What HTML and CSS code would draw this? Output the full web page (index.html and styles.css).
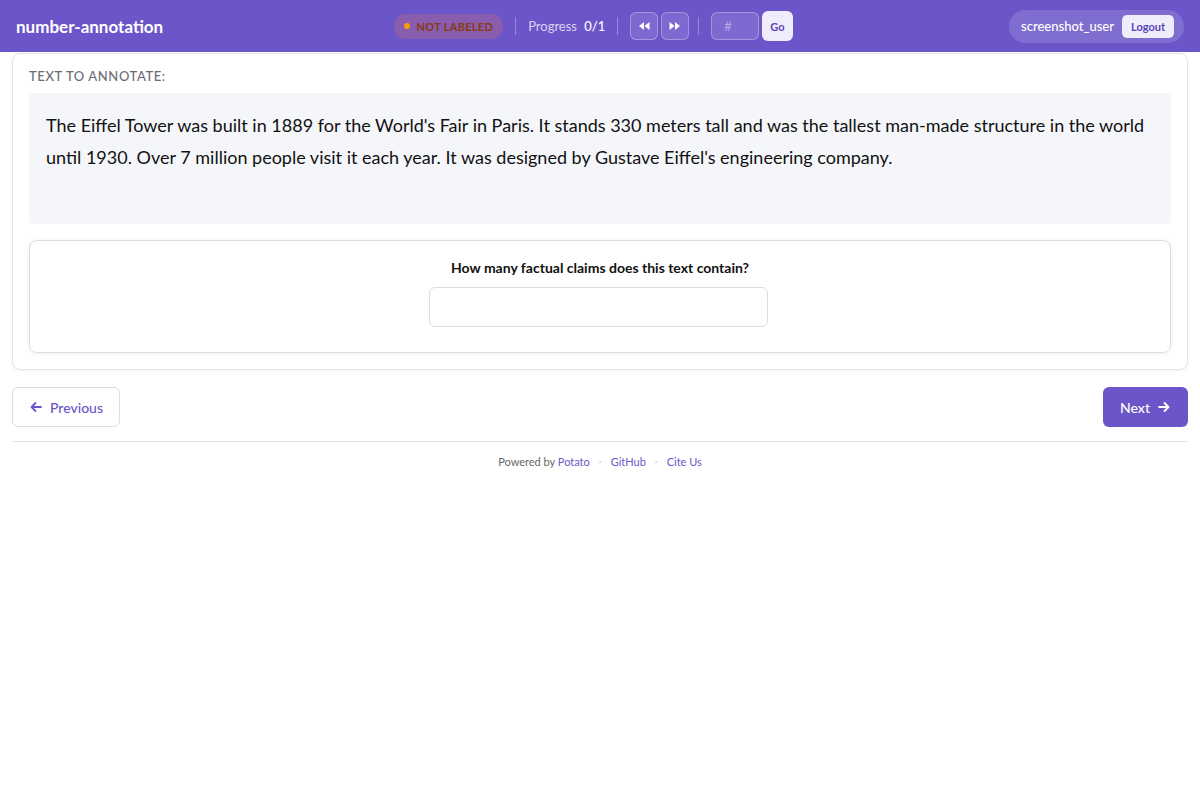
FILE: index.html
```html
<!DOCTYPE html>
<html lang="en">
<head>
  <meta charset="UTF-8">
  <meta name="viewport" content="width=device-width, initial-scale=1.0">
  <title>number-annotation</title>
  <link rel="stylesheet" href="styles.css">
</head>
<body>
  <header class="topbar">
    <div class="brand">number-annotation</div>

    <div class="status-area">
      <span class="status-pill"><span class="dot"></span>NOT LABELED</span>
      <span class="divider"></span>
      <span class="progress">Progress <b>0/1</b></span>
      <span class="divider"></span>
      <button class="nav-btn" title="First">
        <svg width="12" height="10" viewBox="0 0 12 10"><path d="M6 1v8L1 5zM11.5 1v8L6.5 5z" fill="#fff"/></svg>
      </button>
      <button class="nav-btn" title="Last">
        <svg width="12" height="10" viewBox="0 0 12 10"><path d="M0.5 1v8L5.5 5zM6 1v8L11 5z" fill="#fff"/></svg>
      </button>
      <span class="divider"></span>
      <input class="jump-input" type="text" placeholder="#">
      <button class="go-btn">Go</button>
    </div>

    <div class="user-box">
      <span class="username">screenshot_user</span>
      <button class="logout-btn">Logout</button>
    </div>
  </header>

  <main class="page">
    <section class="card">
      <div class="section-label">TEXT TO ANNOTATE:</div>
      <div class="text-box">
        The Eiffel Tower was built in 1889 for the World's Fair in Paris. It stands 330 meters tall and was the tallest man-made structure in the world until 1930. Over 7 million people visit it each year. It was designed by Gustave Eiffel's engineering company.
      </div>

      <div class="question">
        <div class="question-title">How many factual claims does this text contain?</div>
        <input class="number-input" type="number">
      </div>
    </section>

    <div class="nav-row">
      <button class="btn btn-outline">
        <svg width="14" height="14" viewBox="0 0 14 14"><path d="M12 7H2.5M6.5 3L2.5 7l4 4" fill="none" stroke="currentColor" stroke-width="1.8" stroke-linecap="round" stroke-linejoin="round"/></svg>
        Previous
      </button>
      <button class="btn btn-primary">
        Next
        <svg width="14" height="14" viewBox="0 0 14 14"><path d="M2 7h9.5M7.5 3l4 4-4 4" fill="none" stroke="currentColor" stroke-width="1.8" stroke-linecap="round" stroke-linejoin="round"/></svg>
      </button>
    </div>

    <footer class="footer">
      <span>Powered by <a href="#">Potato</a></span>
      <span class="sep">·</span>
      <a href="#">GitHub</a>
      <span class="sep">·</span>
      <a href="#">Cite Us</a>
    </footer>
  </main>
</body>
</html>
```

FILE: styles.css
```css
* {
  margin: 0;
  padding: 0;
  box-sizing: border-box;
}

body {
  font-family: 'Lato', 'Noto Sans', sans-serif;
  background-color: #fff;
  color: #111;
}

button, input {
  font-family: inherit;
}

/* top bar */
.topbar {
  height: 52px;
  background-color: #6c55c9;
  display: flex;
  align-items: center;
  justify-content: space-between;
  padding: 0 16px;
  color: #fff;
}

.brand {
  font-size: 17px;
  font-weight: 700;
  width: 378px;
}

.status-area {
  display: flex;
  align-items: center;
  gap: 6px;
  margin-right: 216px;
}

.status-pill {
  display: inline-flex;
  align-items: center;
  gap: 6px;
  background-color: rgba(190, 110, 120, 0.35);
  color: #8a3a14;
  font-size: 11px;
  font-weight: 700;
  letter-spacing: 0.3px;
  padding: 6px 10px;
  border-radius: 12px;
}

.dot {
  width: 6px;
  height: 6px;
  border-radius: 50%;
  background-color: #f59e0b;
}

.divider {
  width: 1px;
  height: 18px;
  background-color: rgba(255, 255, 255, 0.3);
  margin: 0 6px;
}

.progress {
  font-size: 13px;
  color: rgba(255, 255, 255, 0.75);
}

.progress b {
  font-weight: 500;
  color: #fff;
  margin-left: 4px;
}

.nav-btn {
  width: 28px;
  height: 28px;
  border-radius: 6px;
  border: 1px solid rgba(255, 255, 255, 0.3);
  background-color: rgba(255, 255, 255, 0.12);
  display: inline-flex;
  align-items: center;
  justify-content: center;
  margin-right: -3px;
}

.jump-input {
  width: 48px;
  height: 28px;
  border-radius: 6px;
  border: 1px solid rgba(255, 255, 255, 0.3);
  background-color: rgba(255, 255, 255, 0.12);
  padding: 0 12px;
  font-size: 13px;
  color: #fff;
  margin-right: -3px;
}

.jump-input::placeholder {
  color: rgba(255, 255, 255, 0.45);
}

.go-btn {
  height: 30px;
  padding: 0 8px;
  border-radius: 6px;
  border: none;
  background-color: #efedfb;
  color: #5b45b8;
  font-size: 11px;
  font-weight: 700;
}

.user-box {
  display: flex;
  align-items: center;
  gap: 8px;
  background-color: rgba(255, 255, 255, 0.14);
  padding: 5px 10px 5px 12px;
  border-radius: 17px;
}

.username {
  font-size: 13px;
  font-weight: 500;
}

.logout-btn {
  background-color: #efedfb;
  color: #5b45b8;
  border: none;
  border-radius: 5px;
  font-size: 11px;
  font-weight: 700;
  padding: 5px 9px;
}

/* main content */
.page {
  padding: 0 12px;
}

.card {
  margin-top: 1px;
  border: 1px solid #e3e3e8;
  border-radius: 8px;
  padding: 14px 16px 16px;
  box-shadow: 0 1px 3px rgba(0, 0, 0, 0.05);
}

.section-label {
  font-size: 13px;
  font-weight: 500;
  letter-spacing: 0.6px;
  color: #6b6b75;
  margin-bottom: 9px;
}

.text-box {
  background-color: #f5f6fa;
  border-radius: 4px;
  padding: 16px 17px 0;
  font-size: 18px;
  line-height: 32px;
  color: #111;
  height: 131px;
}

.question {
  margin-top: 16px;
  border: 1px solid #dddde3;
  border-radius: 8px;
  box-shadow: 0 1px 4px rgba(0, 0, 0, 0.08);
  padding: 18px 16px 25px;
  display: flex;
  flex-direction: column;
  align-items: center;
}

.question-title {
  font-size: 14px;
  font-weight: 700;
  margin-bottom: 11px;
}

.number-input {
  width: 339px;
  height: 40px;
  border: 1px solid #dcdce2;
  border-radius: 6px;
  background-color: #fff;
  margin-right: 3px;
}

.nav-row {
  display: flex;
  justify-content: space-between;
  margin-top: 17px;
  padding-bottom: 14px;
  border-bottom: 1px solid #e3e3e8;
}

.btn {
  height: 40px;
  display: inline-flex;
  align-items: center;
  gap: 7px;
  font-size: 14px;
  font-weight: 500;
  border-radius: 6px;
  padding: 0 16px;
  cursor: pointer;
}

.btn-outline {
  background-color: #fff;
  color: #6c55c9;
  border: 1px solid #dcdce2;
}

.btn-primary {
  background-color: #6c55c9;
  color: #fff;
  border: none;
  padding: 0 17px;
}

.footer {
  display: flex;
  justify-content: center;
  gap: 9px;
  font-size: 11px;
  color: #666;
  padding-top: 13px;
}

.footer a {
  color: #6c55c9;
  text-decoration: none;
}

.footer .sep {
  color: #ccc;
}
```
